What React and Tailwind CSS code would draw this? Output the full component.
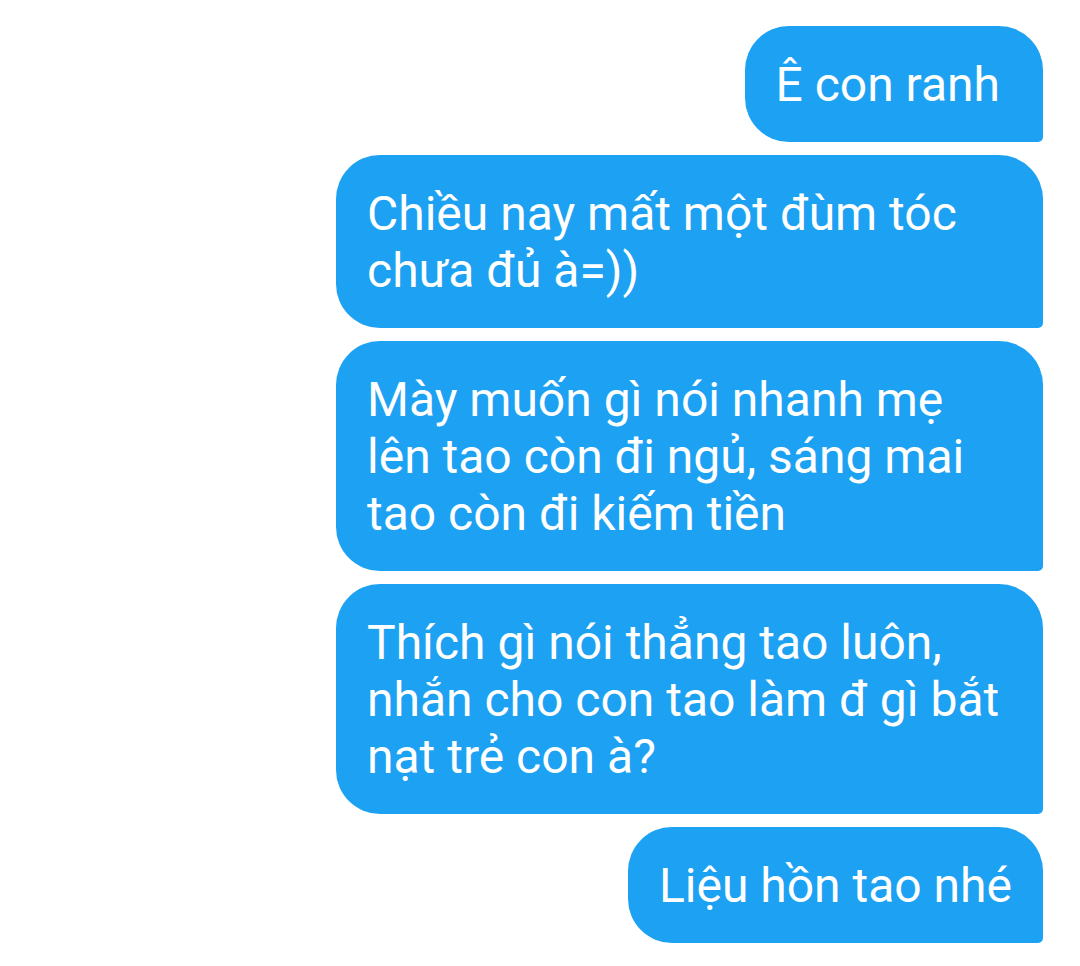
import React from "react";

const Bubble = ({ children, extra = "" }) => (
  <div
    className={
      "bg-[#1da1f2] text-white text-[48px] leading-[57px] rounded-tl-[44px] rounded-tr-[44px] rounded-bl-[44px] rounded-br-[5px] pt-[30px] pb-[29px] pl-[31px] whitespace-nowrap " +
      extra
    }
  >
    {children}
  </div>
);

export default function App() {
  return (
    <div
      className="w-[1080px] h-[966px] bg-white flex flex-col items-end pt-[26px] pr-[37px] gap-[13px]"
      style={{ fontFamily: "Roboto, 'Noto Sans', sans-serif" }}
    >
      <Bubble extra="pr-[43px]">Ê con ranh</Bubble>
      <Bubble extra="w-[707px]">
        Chiều nay mất một đùm tóc
        <br />
        chưa đủ à=))
      </Bubble>
      <Bubble extra="w-[707px]">
        Mày muốn gì nói nhanh mẹ
        <br />
        lên tao còn đi ngủ, sáng mai
        <br />
        tao còn đi kiếm tiền
      </Bubble>
      <Bubble extra="w-[707px]">
        Thích gì nói thẳng tao luôn,
        <br />
        nhắn cho con tao làm đ gì bắt
        <br />
        nạt trẻ con à?
      </Bubble>
      <Bubble extra="pr-[31px]">Liệu hồn tao nhé</Bubble>
    </div>
  );
}
